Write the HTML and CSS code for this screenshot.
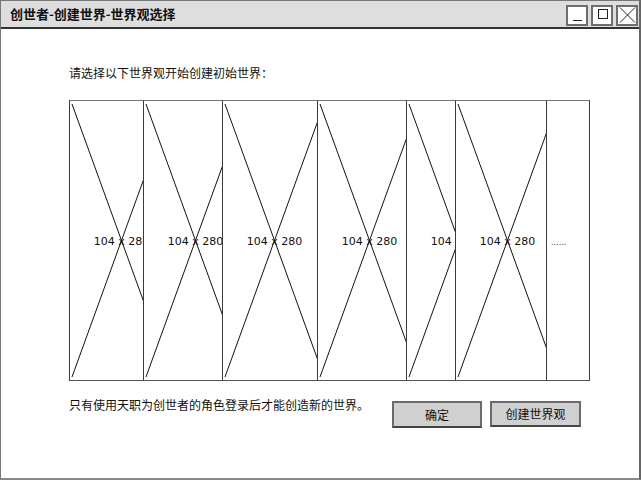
FILE: index.html
```html
<!DOCTYPE html>
<html lang="zh-CN">
<head>
<meta charset="utf-8">
<title>创世者-创建世界-世界观选择</title>
<link rel="stylesheet" href="styles.css">
</head>
<body>
<div class="window">
  <div class="titlebar">
    <span class="title">创世者-创建世界-世界观选择</span>
    <div class="controls">
      <span class="ctrl"><svg width="17" height="16" viewBox="0 0 17 16"><line x1="4" y1="13.5" x2="13" y2="13.5" stroke="#222" stroke-width="1"/></svg></span>
      <span class="ctrl"><svg width="17" height="16" viewBox="0 0 17 16"><rect x="4.5" y="2.5" width="9" height="9" fill="none" stroke="#222" stroke-width="1"/></svg></span>
      <span class="ctrl"><svg width="17" height="16" viewBox="0 0 17 16"><path d="M1 0.5 L16 15.5 M16 0.5 L1 15.5" stroke="#222" stroke-width="1" fill="none"/></svg></span>
    </div>
  </div>
  <div class="content">
    <p class="prompt">请选择以下世界观开始创建初始世界：</p>
    <div class="strip">
      <div class="ph ph1"><svg class="cross" viewBox="0 0 104 281" preserveAspectRatio="none"><path d="M2 3 L102 278 M2 278 L102 3" vector-effect="non-scaling-stroke"/></svg><span class="dim">104 x 280</span></div>
      <div class="ph ph2"><svg class="cross" viewBox="0 0 104 281" preserveAspectRatio="none"><path d="M2 3 L102 278 M2 278 L102 3" vector-effect="non-scaling-stroke"/></svg><span class="dim">104 x 280</span></div>
      <div class="ph ph3"><svg class="cross" viewBox="0 0 104 281" preserveAspectRatio="none"><path d="M2 3 L102 278 M2 278 L102 3" vector-effect="non-scaling-stroke"/></svg><span class="dim">104 x 280</span></div>
      <div class="ph ph4"><svg class="cross" viewBox="0 0 104 281" preserveAspectRatio="none"><path d="M2 3 L102 278 M2 278 L102 3" vector-effect="non-scaling-stroke"/></svg><span class="dim">104 x 280</span></div>
      <div class="ph ph5"><svg class="cross" viewBox="0 0 104 281" preserveAspectRatio="none"><path d="M2 3 L102 278 M2 278 L102 3" vector-effect="non-scaling-stroke"/></svg><span class="dim">104 x 280</span></div>
      <div class="ph ph6"><svg class="cross" viewBox="0 0 104 281" preserveAspectRatio="none"><path d="M2 3 L102 278 M2 278 L102 3" vector-effect="non-scaling-stroke"/></svg><span class="dim">104 x 280</span></div>
      <div class="more"><span class="dots">......</span></div>
    </div>
    <div class="footer">
      <p class="note">只有使用天职为创世者的角色登录后才能创造新的世界。</p>
      <div class="actions">
        <button class="btn btn-ok">确定</button>
        <button class="btn btn-new">创建世界观</button>
      </div>
    </div>
  </div>
</div>
</body>
</html>
```

FILE: styles.css
```css
* { box-sizing: border-box; }
html, body { margin: 0; padding: 0; background: #fff; }
body { font-family: "Noto Sans CJK SC", "Noto Sans", sans-serif; color: #111; }

.window {
  width: 641px;
  height: 480px;
  border: 1px solid #777;
  border-right: 2px solid #666;
  border-bottom: 2px solid #888;
  display: flex;
  flex-direction: column;
  background: #fff;
}

.titlebar {
  height: 28px;
  flex: none;
  background: #dedede;
  border-bottom: 2px solid #333;
  display: flex;
  align-items: center;
  padding-left: 9px;
  padding-right: 1px;
}
.title {
  font-weight: 700;
  font-size: 13px;
  line-height: 16px;
  color: #111;
}
.controls {
  margin-left: auto;
  display: flex;
  gap: 3px;
  padding-top: 2px;
}
.ctrl {
  width: 22px;
  height: 21px;
  border: 2px solid #6e6e6e;
  background: #fff;
  display: flex;
  align-items: center;
  justify-content: center;
}
.ctrl svg { display: block; }

.content {
  flex: 1;
  display: flex;
  flex-direction: column;
  padding: 0 58px 0 68px;
}
.prompt {
  margin: 36px 0 0;
  font-size: 12px;
  line-height: 16px;
}

.strip {
  margin-top: 19px;
  display: flex;
  align-self: flex-start;
  height: 281px;
}
.ph, .more {
  position: relative;
  z-index: 0;
}
.ph {
  width: 105px;
  height: 281px;
  flex: none;
  border: 1px solid #3a3a3a;
  border-top-color: #777;
  border-bottom-color: #555;
  background: #fff;
  display: grid;
  overflow: hidden;
}
.ph > * { grid-area: 1 / 1; }
.cross {
  width: 100%;
  height: 100%;
  display: block;
}
.cross path { stroke: #111; stroke-width: 1; fill: none; }
.dim {
  align-self: center;
  justify-self: center;
  font-family: "DejaVu Sans", sans-serif;
  font-size: 11px;
  line-height: 14px;
  white-space: nowrap;
  color: #111;
  margin-top: 2px;
}
.ph1 { margin-right: -31px; }
.ph2 { margin-right: -26px; }
.ph3 { margin-right: -10px; }
.ph4 { margin-right: -16px; }
.ph5 { margin-right: -56px; }
.ph6 { margin-right: -14px; }
.more {
  width: 44px;
  height: 281px;
  flex: none;
  border: 1px solid #3a3a3a;
  border-top-color: #777;
  border-bottom-color: #555;
  background: #fff;
  display: flex;
  align-items: center;
  padding-left: 4px;
}
.dots {
  font-family: "DejaVu Sans", sans-serif;
  font-size: 8px;
  line-height: 10px;
  color: #333;
  margin-top: 4px;
}

.footer {
  margin-top: 16px;
  display: flex;
  align-items: flex-start;
}
.note {
  margin: 0;
  font-size: 12px;
  line-height: 16px;
}
.actions {
  margin-left: auto;
  margin-top: 4px;
  display: flex;
  gap: 8px;
}
.btn {
  width: 91px;
  height: 27px;
  padding: 0;
  background: #d0d0d0;
  border: 2px solid #6b6b6b;
  border-bottom-color: #444;
  font-family: "Noto Sans CJK SC", "Noto Sans", sans-serif;
  font-size: 12px;
  line-height: 16px;
  color: #111;
}
.btn-ok { width: 90px; }
.btn-new { height: 26px; }
```
